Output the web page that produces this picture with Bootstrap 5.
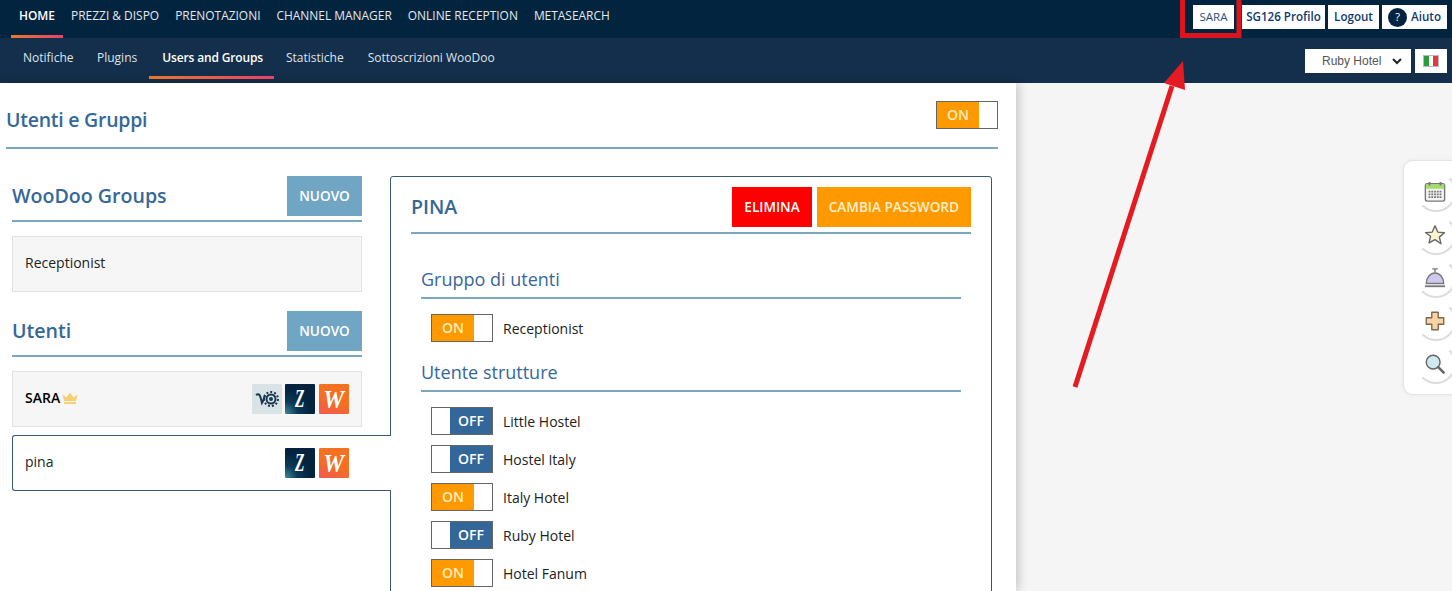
<!DOCTYPE html>
<html lang="it"><head><meta charset="utf-8"><title>Utenti e Gruppi</title>
<link href="https://cdn.jsdelivr.net/npm/bootstrap@5.3.0/dist/css/bootstrap.min.css" rel="stylesheet">
<style>
html,body{height:591px;overflow:hidden}
body{font-family:"Open Sans",sans-serif;background:#f5f5f6;color:#222;font-size:14px;position:relative}
.topbar{height:38px;background:#03243f;padding-left:11px}
.subbar{height:45px;background:#142f4b;padding-left:11px}
.tnav{display:block;color:#e4e8ec;font-size:11.95px;padding:7px 8px 0;height:38px;text-decoration:none;position:relative;white-space:nowrap}
.tnav.act{color:#fff;font-weight:600}
.tnav.act::after,.snav.act::after{content:"";position:absolute;left:0;right:0;bottom:0;height:3px;background:linear-gradient(90deg,#e8772e,#e8416c)}
.snav{display:block;color:#dfe4e9;font-size:12px;padding:11px 12px 0;height:41px;text-decoration:none;position:relative;white-space:nowrap}
.snav.act{color:#fff;font-weight:600;letter-spacing:-.15px}
.snav.first{padding-right:11.500px}
.snav.act{padding-left:13px;padding-right:11px}
.tactions{gap:3px;padding:5px 5px 0 0}
.tbtn{background:#fff;color:#0d3a6e;font-weight:600;font-size:11.6px;height:24px;padding:0;white-space:nowrap;display:flex;align-items:center;justify-content:center;gap:4px}
.b-sara{width:41px;font-weight:400;font-size:11.5px;color:#2b4f7d;margin-right:5px}
.b-prof{width:83px}.b-log{width:51px}.b-aiu{width:65px}
.qmark{width:19px;height:19px;border-radius:50%;background:#03243f;color:#fff;font-size:11px;display:flex;align-items:center;justify-content:center;font-weight:400}
.hsel{width:106px;height:24px;background:#fff;color:#555;font:12px "Liberation Sans",sans-serif;display:flex;align-items:center;justify-content:space-between;padding:0 9px 0 17px}
.flagbox{width:32px;height:24px;background:#fff;display:flex;align-items:center;justify-content:center}
.flagi{width:16px;height:12px;display:flex;border:1px solid #bbb}
.flagi i{flex:1}
.hotelbar{gap:4px;padding:11px 5px 0 0}
.mainp{width:1016px;height:508px;background:#fff;box-shadow:2px 0 10px rgba(0,0,0,.22);padding:18px 18px 0 6px;overflow:hidden}
.ptitle{color:#356899;font-size:19.5px;letter-spacing:-.25px;font-weight:600;margin:0;line-height:28px;padding-top:5px}
.hbar{border-bottom:2px solid #79a8bf}
.swt{display:flex;width:62px;height:28px;border:1px solid #666;background:#fff;font-weight:600;color:#fff;font-size:14px;flex:none}
.swt span{display:flex;align-items:center;justify-content:center}
.swt .on{width:42px;background:#ff9900;color:#ffeebb;padding-bottom:2px}
.swt .off{flex:0 0 42px;background:#336699;padding-bottom:2px}
.swt .blank{flex:1}
.leftc{width:350px;flex:none;margin-left:6px}
.lhead{height:46px;align-items:flex-start}
.h2l{color:#356899;font-size:19.6px;font-weight:600;margin:0;line-height:40px}
.bnew{width:75px;height:40px;background:#71a5c4;color:#fff;font-size:13.6px;font-weight:600;display:flex;align-items:center;justify-content:center}
.item{height:56px;background:#f6f6f6;border:1px solid #e2e2e2;padding:0 12px;display:flex;align-items:center;justify-content:space-between;margin-top:14px}
.item>.lbl{margin-bottom:3px}
.item.sel{background:#fff;border:1px solid #3a5873;border-right:0;border-radius:3px 0 0 3px;width:379px;position:relative;z-index:2;padding-right:42px;margin-top:8px}
.lg{width:30px;height:30px;display:flex;align-items:center;justify-content:center;border-radius:1px;font-family:"Liberation Serif",serif;font-weight:700;color:#fff;font-size:25px;font-style:italic;overflow:hidden}
.lg.z{background:radial-gradient(circle at 0 100%,#3f8a9b 0,#0b3a55 30%,#04233f 60%)}
.lg.z b{display:block;transform:scaleX(.62)}
.lg.w{background:linear-gradient(20deg,#f25a50,#f5701f 50%)}
.lg.w b{display:block;font-size:26px;transform:scaleX(.9)}
.lg.g{background:#d9e2e5;margin-right:-1px}
.logos{gap:4px}
.rightp{width:602px;height:430px;border:1px solid #3a5873;border-radius:3px;margin-left:28px;padding:10px 20px;flex:none}
.pn{color:#356899;font-size:19.6px;font-weight:600;line-height:40px}
.act1{height:40px;display:flex;align-items:center;padding:0 12px;color:#fff;font-weight:600;font-size:13.6px}
.h3r{color:#356899;font-size:18px;font-weight:400;margin:0;line-height:24px;padding-bottom:6px}
.rowt{height:38px;display:flex;align-items:center;gap:10px;padding-left:10px;font-size:14px}
.dock{position:absolute;left:1403px;top:160px;width:60px;height:235px;background:#fff;border:1px solid #e4e4e4;border-radius:10px;box-shadow:0 0 4px rgba(0,0,0,.06);display:flex;flex-direction:column;padding:20px 0 0 20px}
.dk{width:22px;height:43px;flex:none;position:relative}
.dk svg{display:block}
.dk::after{content:"";position:absolute;left:-8px;top:-9px;width:40px;height:40px;border-radius:50%;border:2px solid transparent;border-right-color:#dcdcdc;border-bottom-color:#dcdcdc}
.annot{position:absolute;left:0;top:0;pointer-events:none;z-index:5}
</style></head><body>
<div class="topbar d-flex justify-content-between">
 <div class="d-flex">
  <a class="tnav act" href="#">HOME</a><a class="tnav" href="#">PREZZI &amp; DISPO</a><a class="tnav" href="#">PRENOTAZIONI</a><a class="tnav" href="#">CHANNEL MANAGER</a><a class="tnav" href="#">ONLINE RECEPTION</a><a class="tnav" href="#">METASEARCH</a>
 </div>
 <div class="d-flex tactions">
  <div class="tbtn b-sara">SARA</div><div class="tbtn b-prof">SG126 Profilo</div><div class="tbtn b-log">Logout</div><div class="tbtn b-aiu"><span class="qmark">?</span>Aiuto</div>
 </div>
</div>
<div class="subbar d-flex justify-content-between">
 <div class="d-flex">
  <a class="snav first" href="#">Notifiche</a><a class="snav" href="#">Plugins</a><a class="snav act" href="#">Users and Groups</a>
  <a class="snav" href="#">Statistiche</a><a class="snav" href="#">Sottoscrizioni WooDoo</a>
 </div>
 <div class="d-flex hotelbar">
  <div class="hsel"><span>Ruby Hotel</span><svg width="10" height="7" viewBox="0 0 10 7"><path d="M1 1l4 4 4-4" fill="none" stroke="#222" stroke-width="2"/></svg></div>
  <div class="flagbox"><div class="flagi"><i style="background:#2a9d3c"></i><i style="background:#fff"></i><i style="background:#e0393e"></i></div></div>
 </div>
</div>
<div class="mainp">
 <div class="hbar d-flex justify-content-between" style="height:48px">
  <h1 class="ptitle">Utenti e Gruppi</h1>
  <div class="swt"><span class="on">ON</span><span class="blank"></span></div>
 </div>
 <div class="d-flex" style="margin-top:27px">
  <div class="leftc">
   <div class="hbar d-flex justify-content-between lhead"><h2 class="h2l">WooDoo Groups</h2><div class="bnew">NUOVO</div></div>
   <div class="item"><span class="lbl">Receptionist</span></div>
   <div class="hbar d-flex justify-content-between lhead" style="margin-top:19px"><h2 class="h2l">Utenti</h2><div class="bnew">NUOVO</div></div>
   <div class="item"><span class="lbl d-flex align-items-center" style="gap:2px"><b style="font-weight:600;color:#000">SARA</b><svg width="16" height="12" viewBox="0 0 16 12"><path d="M.5 2.500l3.800 3L8 .5l3.700 5 3.800-3-1.500 6.500H2zM2 10h12v2H2z" fill="#f6cf70"/></svg></span>
    <span class="d-flex logos"><span class="lg g"><svg width="26" height="18" viewBox="0 0 26 18"><g fill="none" stroke="#17384f" stroke-width="2"><circle cx="17" cy="9" r="4.500"/><circle cx="17" cy="9" r="1"/><circle cx="17" cy="9" r="7" stroke-dasharray="2 2"/><path d="M2 5c3-2 4 0 5 4l1 4c2-3 2-6 3-8"/></g></svg></span><span class="lg z"><b>Z</b></span><span class="lg w"><b>W</b></span></span></div>
   <div class="item sel"><span class="lbl">pina</span><span class="d-flex logos"><span class="lg z"><b>Z</b></span><span class="lg w"><b>W</b></span></span></div>
  </div>
  <div class="rightp">
   <div class="hbar d-flex justify-content-between align-items-start" style="height:47px"><span class="pn">PINA</span><div class="d-flex" style="gap:5px"><div class="act1" style="background:#fe0000">ELIMINA</div><div class="act1" style="background:#ff9900;color:#ffefc8">CAMBIA PASSWORD</div></div></div>
   <div style="padding:33px 10px 0">
    <div class="hbar h3r">Gruppo di utenti</div>
    <div class="rowt" style="margin-top:10px"><div class="swt"><span class="on">ON</span><span class="blank"></span></div>Receptionist</div>
    <div class="hbar h3r" style="margin-top:13px">Utente strutture</div>
    <div class="rowt" style="margin-top:10px"><div class="swt"><span class="blank"></span><span class="off">OFF</span></div>Little Hostel</div>
    <div class="rowt"><div class="swt"><span class="blank"></span><span class="off">OFF</span></div>Hostel Italy</div>
    <div class="rowt"><div class="swt"><span class="on">ON</span><span class="blank"></span></div>Italy Hotel</div>
    <div class="rowt"><div class="swt"><span class="blank"></span><span class="off">OFF</span></div>Ruby Hotel</div>
    <div class="rowt"><div class="swt"><span class="on">ON</span><span class="blank"></span></div>Hotel Fanum</div>
   </div>
  </div>
 </div>
</div>
<div class="dock">
 <div class="dk"><svg width="22" height="22" viewBox="0 0 24 24"><rect x="1.500" y="3" width="21" height="19" rx="2" fill="#f4f4f4" stroke="#777" stroke-width="1.500"/><rect x="2" y="3.500" width="20" height="5" fill="#a5dc6e"/><path d="M6 1v4M18 1v4" stroke="#777" stroke-width="2"/><path d="M5 11.500h14M5 14.500h14M5 17.500h14" stroke="#777" stroke-width="2" stroke-dasharray="2 1"/></svg></div>
 <div class="dk"><svg width="22" height="22" viewBox="0 0 24 24"><path d="M12 2l3 6.800 7.300.7-5.500 4.800 1.700 7.200L12 17l-6.500 3.500 1.700-7.200L1.700 9.500 9 8.800z" fill="#fdf2d0" stroke="#666" stroke-width="1.500" stroke-linejoin="round"/></svg></div>
 <div class="dk"><svg width="22" height="22" viewBox="0 0 24 24"><path d="M9 2h6M12 2v4" stroke="#777" stroke-width="1.500"/><path d="M2.500 18a9.500 11.500 0 0 1 19 0z" fill="#cfc8ef" stroke="#777" stroke-width="1.500"/><path d="M1 21h22" stroke="#777" stroke-width="2"/></svg></div>
 <div class="dk"><svg width="22" height="22" viewBox="0 0 24 24"><path d="M8.500 2.500h7v6h6v7h-6v6h-7v-6h-6v-7h6z" fill="#fbd3a2" stroke="#7a6a55" stroke-width="1.500" stroke-linejoin="round"/></svg></div>
 <div class="dk"><svg width="22" height="22" viewBox="0 0 24 24"><circle cx="10" cy="10" r="7.500" fill="#cfe8f2" stroke="#666" stroke-width="1.600"/><path d="M15.500 15.500l6 6" stroke="#666" stroke-width="2.800" stroke-linecap="round"/></svg></div>
</div>
<svg class="annot" width="1452" height="591" viewBox="0 0 1452 591">
 <path d="M1182.500 0V35.500H1239V0" fill="none" stroke="#dc141c" stroke-width="5"/>
 <path d="M1075 387L1172 86" stroke="#e51b23" stroke-width="5"/>
 <path d="M1183 61l2 29-21-7z" fill="#e51b23"/>
</svg>
</body></html>
